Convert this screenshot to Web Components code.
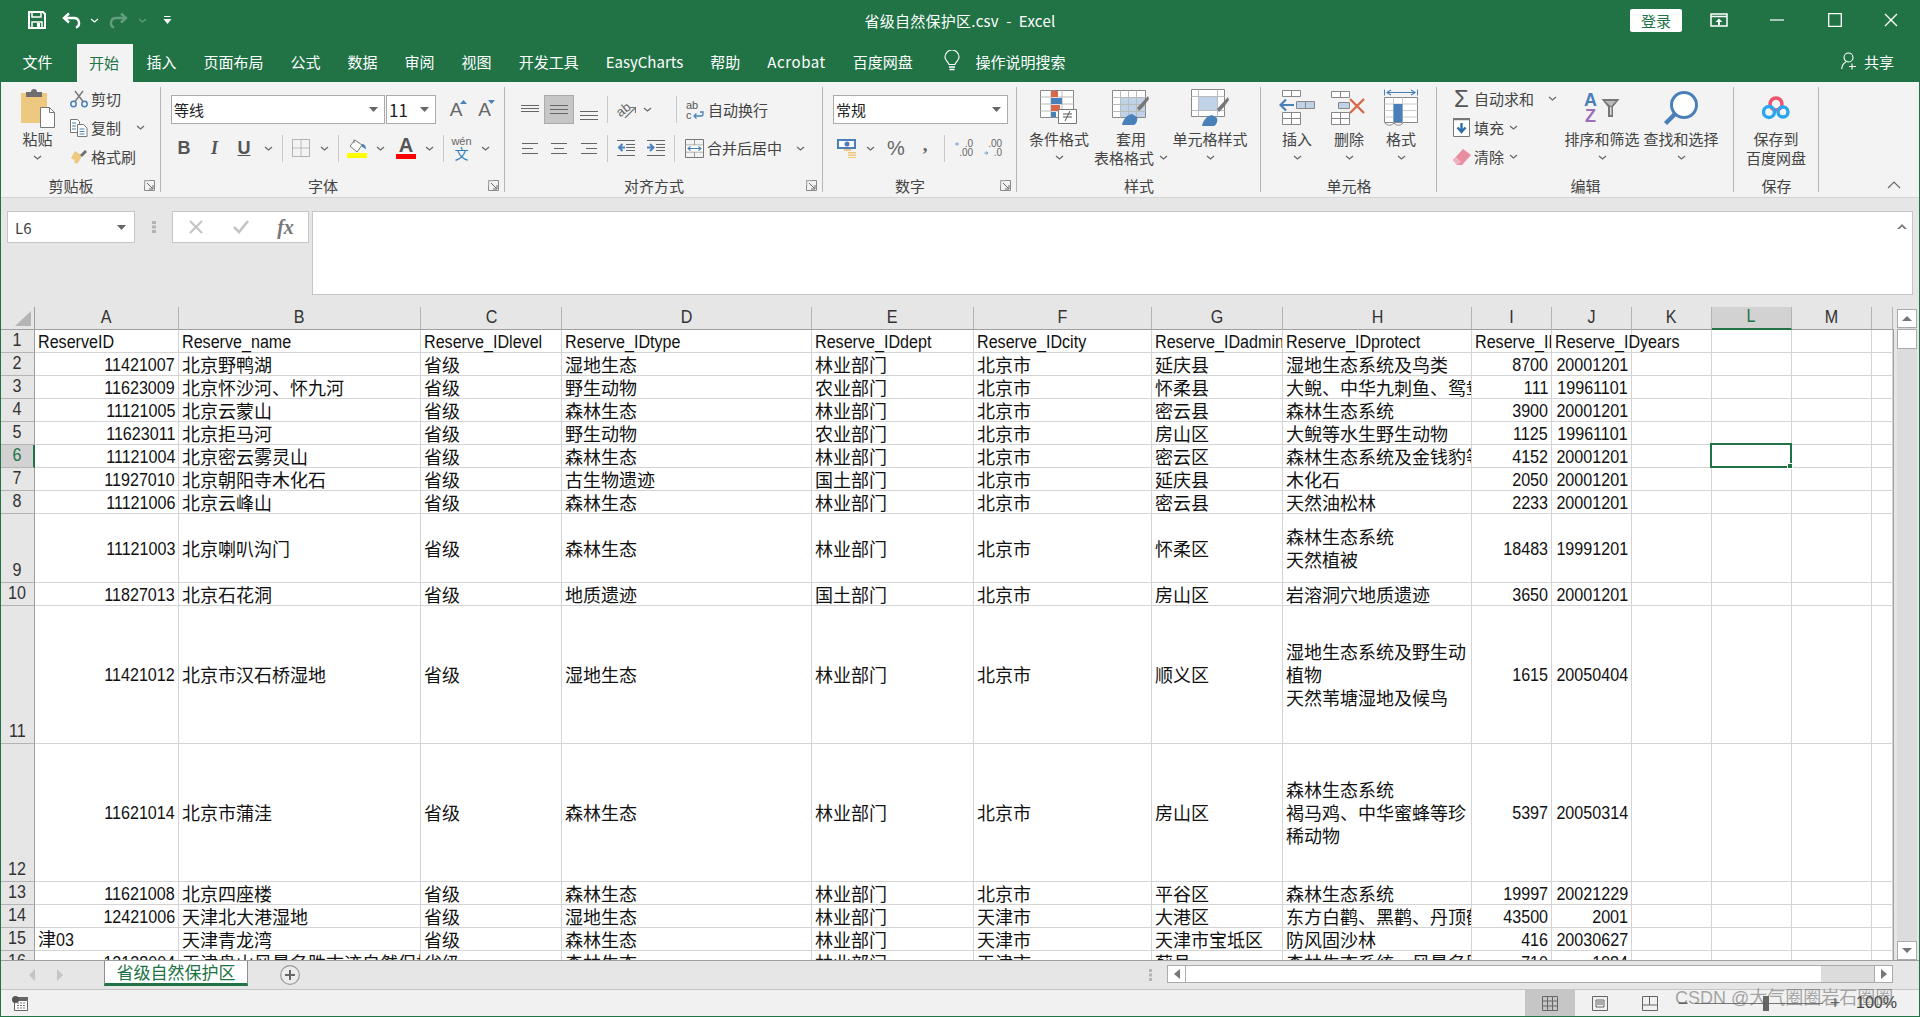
<!DOCTYPE html>
<html lang="zh-CN">
<head>
<meta charset="utf-8">
<title>省级自然保护区.csv - Excel</title>
<style>
  html, body { margin: 0; height: 100%; overflow: hidden; background: #f3f3f3; }
  body { font-family: "Noto Sans CJK SC", "Liberation Sans", sans-serif; }
</style>
</head>
<body>
<xl-window>
  <xl-titlebar></xl-titlebar>
  <xl-tabs></xl-tabs>
  <xl-ribbon></xl-ribbon>
  <xl-formula></xl-formula>
  <xl-sheet></xl-sheet>
  <xl-sheetbar></xl-sheetbar>
  <xl-status></xl-status>
</xl-window>
<script>
const GREEN = '#217346';
const svg = (w, h, body) => `<svg xmlns="http://www.w3.org/2000/svg" width="${w}" height="${h}" viewBox="0 0 ${w} ${h}" fill="none">${body}</svg>`;
const chev = svg(9, 5, '<path d="M1 1l3.5 3L8 1" stroke="#666" stroke-width="1.2"/>');
const drop = svg(9, 5, '<path d="M0 0h9L4.5 5z" fill="#666"/>');
const launcher = svg(11, 11, '<path d="M.5.5h10v10H.5z" stroke="#888"/><path d="M1 1h5M1 1v5" stroke="#ccc"/><path d="M3 3l5.5 5.5M9 5v4H5" stroke="#666"/>');
const lines = (ys, x1, x2, c = '#666') => ys.map(y => `<path d="M${x1} ${y}.5H${x2}" stroke="${c}"/>`).join('');
const rows3 = (a, b, c) => `<path d="M${a[0]} .5H${a[1]}M${b[0]} 5.5H${b[1]}M${c[0]} 10.5H${c[1]}" stroke="#666"/>`;

const ICONS = {
  save: svg(18, 18, '<path d="M1 1h14l2 2v14H1z" stroke="#fff" stroke-width="2"/><path d="M4 1v5h9V1" stroke="#fff" stroke-width="1.5"/><path d="M4 17v-6h10v6" stroke="#fff" stroke-width="1.5"/><path d="M9 12h3v4H9z" fill="#fff"/>'),
  undo: svg(20, 17, '<path d="M7 1.5L2 6l5 4.5" stroke="#fff" stroke-width="2.4"/><path d="M3 6h9a5 5 0 0 1 2 9.6" stroke="#fff" stroke-width="2.4"/>'),
  redo: svg(20, 17, '<path d="M13 1.5L18 6l-5 4.5" stroke="#fff" stroke-width="2.4"/><path d="M17 6H8a5 5 0 0 0-2 9.6" stroke="#fff" stroke-width="2.4"/>'),
  wchev: svg(9, 5, '<path d="M1 1l3.5 3L8 1" stroke="#fff" stroke-width="1.2"/>'),
  custom: svg(9, 9, '<path d="M1 .5h6.5" stroke="#fff"/><path d="M.5 3h8L4.5 8z" fill="#fff"/>'),
  opts: svg(18, 14, '<path d="M1 1h16v12H1z" stroke="#fff" stroke-width="1.5"/><path d="M1 3.5h16" stroke="#fff" stroke-width="1.5"/><path d="M9 5.5l3.5 3.5H10v3H8V9H5.5z" fill="#fff"/>'),
  min: svg(14, 2, '<path d="M0 1h14" stroke="#fff" stroke-width="1.2"/>'),
  max: svg(14, 14, '<path d="M.7.7h12.6v12.6H.7z" stroke="#fff" stroke-width="1.3"/>'),
  close: svg(14, 14, '<path d="M1 1l12 12M13 1L1 13" stroke="#fff" stroke-width="1.4"/>'),
  bulb: svg(16, 22, '<path d="M5 14.5C4 11.5 1 10.5 1 7a7 7 0 0 1 14 0c0 3.5-3 4.5-4 7.5z" stroke="#fff" stroke-width="1.2"/><path d="M5 17h6M5.5 19.5h5" stroke="#fff" stroke-width="1.6"/>'),
  share: svg(16, 18, '<circle cx="7.5" cy="5.5" r="4.5" stroke="#fff" stroke-width="1.1"/><path d="M.7 17c.3-4 2-6 4.3-7M11 11.5v6M8 14.5h7" stroke="#fff" stroke-width="1.1"/>'),
  paste: svg(36, 40, '<path d="M1 5h26v30H1z" fill="#edc87e"/><path d="M6 4h5a3 3 0 0 1 6 0h5v5H6z" fill="#6e6e6e"/><path d="M20.5 19.5h9l5 5v15h-14z" fill="#fff" stroke="#777"/><path d="M29.5 19.5v5h5" stroke="#777"/>'),
  cut: svg(18, 18, '<circle cx="3.5" cy="14" r="2.7" stroke="#4a80ba" stroke-width="1.5"/><circle cx="14.5" cy="14" r="2.7" stroke="#4a80ba" stroke-width="1.5"/><path d="M5 11.5L13 1M13 11.5L5 1" stroke="#777" stroke-width="1.4"/>'),
  copy: svg(18, 18, '<path d="M.5.5h7l2 2v11H.5z" fill="#fff" stroke="#777"/><path d="M7.5 5.5h6L17 9v8.5H7.5z" fill="#fff" stroke="#777"/><path d="M2 4h4M2 7h4M2 10h4M9.5 10h5M9.5 12.5h5M9.5 15h5" stroke="#4a80ba"/>'),
  brush: svg(18, 16, '<path d="M11 6L5 2 1 9l3 2 1-1-1 3 3 2 4-6z" fill="#edc87e"/><path d="M10 6l5-5 2 2-5 5z" fill="#6e6e6e"/>'),
  borders: svg(18, 18, '<path d="M.5.5h17v17H.5z" stroke="#777" stroke-dasharray="1 1"/><path d="M9 .5v17M.5 9h17" stroke="#888" stroke-dasharray="1 1"/>'),
  fill: svg(20, 14, '<path d="M3 7l5-6 7 5-5 7z" fill="#fff" stroke="#777"/><path d="M7 4V.5" stroke="#777"/><path d="M15 5c3 0 4 3 4 5-2 0-2-2-4-2z" fill="#4a80ba"/>'),
  wrap: svg(18, 16, '<path d="M14 9h3v2a2 2 0 0 1-2 2H8" stroke="#4a80ba" stroke-width="1.3"/><path d="M10.5 10.5L8 13l2.5 2.5" stroke="#4a80ba" stroke-width="1.3"/>'),
  merge: svg(19, 19, '<path d="M.5.5h18v18H.5z" stroke="#777"/><path d="M.5 6h18M.5 13h18M9.5.5V6M9.5 13v5.5" stroke="#999"/><path d="M1 6.5h17v6H1z" fill="#fff"/><path d="M3 9.5h13M5.5 7.5l-2.5 2 2.5 2M13.5 7.5l2.5 2-2.5 2" stroke="#4a80ba" stroke-width="1.1"/>'),
  orient: svg(20, 20, '<path d="M9 18L19 8M14 7.5h5.5V13" stroke="#777" stroke-width="1.2"/>'),
  indentL: svg(18, 16, lines([0, 15], 0, 18) + lines([4, 7, 10], 9, 18) + '<path d="M8 7.5H3M5.5 4L2 7.5 5.5 11" stroke="#4a80ba" stroke-width="2"/>'),
  indentR: svg(18, 16, lines([0, 15], 0, 18) + lines([4, 7, 10], 9, 18) + '<path d="M0 7.5h5M3 4l3.5 3.5L3 11" stroke="#4a80ba" stroke-width="2"/>'),
  money: svg(20, 19, '<path d="M0 0h19v10H0z" fill="#4a80ba"/><path d="M2 2h15v6H2z" fill="#fff"/><circle cx="10" cy="5" r="2.5" fill="#4a80ba"/><path d="M11 13h8v1.5h-8zM11 15.5h8V17h-8zM11 18h8v1h-8z" fill="#edc87e"/><path d="M7 11h7" stroke="#edc87e" stroke-width="2"/>'),
  decUp: svg(18, 8, '<path d="M8 4H2M4.5 1L1.5 4l3 3" stroke="#4a80ba" stroke-width="1.6"/>'),
  decDown: svg(18, 8, '<path d="M1 4h6M4.5 1l3 3-3 3" stroke="#4a80ba" stroke-width="1.6"/>'),
  cond: svg(38, 36, '<path d="M.5.5h33v27H.5z" fill="#fff" stroke="#888"/><path d="M11 .5v27M22 .5v27M.5 7h33M.5 14h33M.5 21h33" stroke="#bbb"/><path d="M11 1h7v6h-7z" fill="#d9674a"/><path d="M11 8h11v6H11z" fill="#4a80ba"/><path d="M11 15h9v6h-9z" fill="#d9674a"/><path d="M11 22h5v5h-5z" fill="#4a80ba"/><path d="M18.5 19.5h18v14h-18z" fill="#fff" stroke="#777"/><path d="M23 27h9M23 24h9M30 21l-5 10" stroke="#555"/>'),
  table: svg(38, 36, '<path d="M.5.5h33v27H.5z" fill="#fff" stroke="#888"/><path d="M8 8h25v19H8z" fill="#bfd2e8"/><path d="M8.5.5v27M16.5.5v27M24.5.5v27M.5 7.5h33M.5 14.5h33M.5 21.5h33" stroke="#bbb"/><path d="M25 18l11-12 1 3-5 7-5 5z" fill="#777"/><path d="M10 35c1-6 5-10 10-11l5 3c1 4-1 7-3 8z" fill="#4a80ba"/>'),
  cellst: svg(39, 38, '<path d="M.5.5h33v27H.5z" fill="#fff" stroke="#888"/><path d="M7.5 7.5h19v14h-19z" fill="#bfd2e8"/><path d="M7.5.5v27M26.5.5v27M.5 7.5h33M.5 21.5h33" stroke="#bbb"/><path d="M26 20l11-12 1 3-5 7-5 5z" fill="#777"/><path d="M11 37c1-6 5-10 10-11l5 3c1 4-1 7-3 8z" fill="#4a80ba"/>'),
  ins: svg(36, 35, '<path d="M3.5.5h18v6h-18zM3.5 22.5h18v12h-18z" fill="#fff" stroke="#888"/><path d="M12.5.5v6M12.5 22.5v12M3.5 28.5h18" stroke="#888"/><path d="M17.5 11.5h18v7h-18z" fill="#bfd2e8" stroke="#888"/><path d="M26.5 11.5v7" stroke="#888"/><path d="M15 15H2M7 9.5L1.5 15 7 20.5" stroke="#4a80ba" stroke-width="2.2"/>'),
  del: svg(36, 34, '<path d="M.5.5h18v6H.5zM.5 21.5h18v12H.5z" fill="#fff" stroke="#888"/><path d="M9.5.5v6M9.5 21.5v12M.5 27.5h18" stroke="#888"/><path d="M7.5 11.5h11v6h-11z" fill="#bfd2e8" stroke="#888"/><path d="M19 8l14 14M33 8L19 22" stroke="#d9674a" stroke-width="2.4"/>'),
  fmt: svg(34, 37, '<path d="M.5.5v6M33.5.5v6" stroke="#4a80ba"/><path d="M3 3.5h28M7 1L3 3.5 7 6M27 1l4 2.5L27 6" stroke="#4a80ba" stroke-width="1.2"/><path d="M.5 8.5h33v25H.5z" fill="#fff" stroke="#888"/><path d="M9.5 8.5v25M18.5 8.5v25M.5 15h33M.5 21.5h33M.5 28h33" stroke="#ccc"/><path d="M9.5 15h9v18h-9z" fill="#4a80ba"/><path d="M1 34c3 3 6 3 9 0 3 3 6 3 9 0" stroke="#888"/>'),
  fillDown: svg(18, 20, '<path d="M.5.5h16v18H.5z" fill="#fff" stroke="#777"/><path d="M0 1h17" stroke="#777" stroke-width="2.5"/><path d="M8.5 5v9M4.5 9.5l4 4.5 4-4.5" stroke="#2f6ea8" stroke-width="2.4"/>'),
  eraser: svg(20, 18, '<path d="M1 12l10-11 8 6-9 10H5z" fill="#e98da0"/><path d="M5 17l-4-5 3-3 5 5z" fill="#f1b3c0"/>'),
  filter: svg(19, 20, '<path d="M.5 1h18L12 9v10H7V9z" fill="#777"/><path d="M4 3h11l-5 5.5z" fill="#bbb"/><path d="M9 9h1.5v8H9z" fill="#ddd"/>'),
  find: svg(36, 36, '<circle cx="21" cy="15" r="12.5" fill="#fff" stroke="#4a80ba" stroke-width="3"/><path d="M12 24L2.5 33.5" stroke="#4a80ba" stroke-width="4.5"/>'),
  baidu: svg(28, 24, '<circle cx="14" cy="8" r="6" stroke="#f0506e" stroke-width="3.4"/><circle cx="7" cy="16" r="5.5" stroke="#2aa7ec" stroke-width="3.4"/><circle cx="21" cy="16" r="5" stroke="#2aa7ec" stroke-width="3.4"/>'),
  close2: svg(14, 14, '<path d="M1 1l12 12M13 1L1 13" stroke="#c4c4c4" stroke-width="2.2"/>'),
  check: svg(16, 14, '<path d="M1 7l5 5L15 1" stroke="#c4c4c4" stroke-width="2.6"/>'),
  macro: svg(16, 15, '<path d="M2.5 4.5h13v10h-13z" fill="#fff" stroke="#666"/><path d="M2 1h14v3H2z" fill="#666"/><path d="M5 7h9M5 9.5h9M5 12h9" stroke="#777" stroke-dasharray="2 1"/><circle cx="3.5" cy="3.5" r="3.5" fill="#555"/>'),
  normal: svg(16, 15, '<path d="M.5.5h15v14H.5zM5.5.5v14M10.5.5v14M.5 5h15M.5 10h15" stroke="#666"/>'),
  pageL: svg(16, 15, '<path d="M.5.5h15v14H.5z" stroke="#666"/><path d="M4 4h8v7H4z" stroke="#666"/><path d="M5 6h6M5 8h6" stroke="#666"/>'),
  pageB: svg(16, 15, '<path d="M.5.5h15v14H.5zM.5 9h15M7.5.5V9" stroke="#666"/>')
};

// 一个工具格: 固定宽度,内容居中
class XlTool extends HTMLElement {
  constructor() { super(); this.attachShadow({ mode: 'open' }); }
  connectedCallback() {
    const w = this.getAttribute('w');
    this.shadowRoot.innerHTML = `<style>
      :host { display: flex; flex: none; align-items: center; justify-content: center; width: ${w}px; height: 100%; color: #555; }
      svg, ::slotted(svg) { display: block; }
    </style><slot></slot>`;
  }
}
customElements.define('xl-tool', XlTool);

class XlCombo extends HTMLElement {
  constructor() { super(); this.attachShadow({ mode: 'open' }); }
  connectedCallback() {
    const w = this.getAttribute('w');
    const size = this.getAttribute('size') || 15;
    this.shadowRoot.innerHTML = `<style>
      :host { display: flex; flex: none; align-items: center; box-sizing: border-box; width: ${w}px; height: 100%; background: #fff; border: 1px solid #ababab; padding: 0 6px 0 2px; font-size: ${size}px; color: #222; }
      span { flex: 1; }
    </style><span><slot></slot></span>${drop}`;
  }
}
customElements.define('xl-combo', XlCombo);

// 大按钮: 图标 + 一到两行文字 + 下拉箭头
class XlBig extends HTMLElement {
  constructor() { super(); this.attachShadow({ mode: 'open' }); }
  connectedCallback() {
    const w = this.getAttribute('w');
    const l1 = this.getAttribute('l1');
    const l2 = this.getAttribute('l2');
    const noChev = this.hasAttribute('nochev');
    const second = l2 ? `<div class="line">${l2}${noChev ? '' : `<span class="ic">${chev}</span>`}</div>`
                      : `<div class="line">${noChev ? '' : chev}</div>`;
    this.shadowRoot.innerHTML = `<style>
      :host { display: block; flex: none; width: ${w}px; }
      .icon { height: 43px; display: flex; align-items: center; justify-content: center; }
      .line { height: 19px; line-height: 19px; display: flex; align-items: center; justify-content: center; white-space: nowrap; }
      .ic { margin-left: 5px; display: flex; }
      svg { display: block; }
    </style>
    <div class="icon"><slot></slot></div>
    <div class="line">${l1}</div>
    ${second}`;
  }
}
customElements.define('xl-big', XlBig);

class XlSmall extends HTMLElement {
  constructor() { super(); this.attachShadow({ mode: 'open' }); }
  connectedCallback() {
    const cm = this.getAttribute('cm');
    this.shadowRoot.innerHTML = `<style>
      :host { display: flex; align-items: center; height: 29px; white-space: nowrap; }
      .icon { width: 25px; flex: none; display: flex; align-items: center; justify-content: center; }
      .ch { margin-left: ${cm || 0}px; display: flex; }
    </style>
    <div class="icon"><slot></slot></div>
    <span>${this.getAttribute('label')}</span>
    ${cm ? `<span class="ch">${chev}</span>` : ''}`;
  }
}
customElements.define('xl-small', XlSmall);

class XlGroup extends HTMLElement {
  constructor() { super(); this.attachShadow({ mode: 'open' }); }
  connectedCallback() {
    const w = this.getAttribute('w');
    const pad = this.getAttribute('pad') || 0;
    const top = this.getAttribute('top') || 4;
    this.shadowRoot.innerHTML = `<style>
      :host { display: flex; flex-direction: column; flex: none; box-sizing: border-box; width: ${w}px; height: 115px; position: relative; }
      :host::after { content: ""; position: absolute; right: 0; top: 5px; bottom: 5px; width: 1px; background: #b6b6b6; }
      .body { flex: 1; min-height: 0; box-sizing: border-box; padding: ${top}px 0 0 ${pad}px; display: flex; }
      .foot { height: 22px; display: flex; align-items: center; padding-bottom: 1px; box-sizing: border-box; }
      .lab { flex: 1; text-align: center; }
      .lau { flex: none; width: 20px; height: 12px; display: flex; justify-content: flex-start; padding-left: 3px; box-sizing: border-box; }
    </style>
    <div class="body"><slot></slot></div>
    <div class="foot"><div class="lab">${this.getAttribute('label')}</div>
    ${this.hasAttribute('launcher') ? `<div class="lau">${launcher}</div>` : ''}</div>`;
  }
}
customElements.define('xl-group', XlGroup);

class XlRibbon extends HTMLElement {
  constructor() { super(); this.attachShadow({ mode: 'open' }); }
  connectedCallback() {
    const t = (w, html = '') => `<xl-tool w="${w}">${html}</xl-tool>`;
    const sep = w => t(w, '<i class="sep"></i>');
    const ic = n => ICONS[n];
    this.shadowRoot.innerHTML = `<style>
      :host { display: flex; height: 116px; box-sizing: border-box; background: #f3f3f3; border-bottom: 1px solid #d4d4d4; font-size: 15px; color: #444; position: relative; }
      .rows { display: flex; flex-direction: column; gap: 9px; }
      .row { display: flex; height: 29px; flex: none; }
      .row2 { height: 30px; }
      .sep { display: block; width: 1px; height: 27px; background: #c8c8c8; }
      .col { display: flex; flex-direction: column; flex: none; margin-top: -2px; }
      .fmtb { font: bold 18px "Liberation Sans", sans-serif; color: #555; }
      .fmti { font: italic bold 18px "Liberation Serif", serif; color: #555; }
      .fmtu { font: bold 18px "Liberation Sans", sans-serif; color: #555; text-decoration: underline; }
      .aa { font: 19px "Liberation Sans", sans-serif; color: #666; position: relative; display: block; margin-right: 4px; }
      .aa svg { position: absolute; left: 10px; top: 1px; }
      .wen { display: flex; flex-direction: column; align-items: center; line-height: 11px; font-size: 11px; color: #666; font-family: "Liberation Sans", sans-serif; }
      .wen span { font: 14px/13px "Noto Sans CJK SC", sans-serif; color: #2f7fc1; }
      .colr { display: flex; flex-direction: column; align-items: center; width: 20px; }
      .colr i { display: block; width: 20px; height: 5px; }
      .colr b { font: bold 20px/17px "Liberation Sans", sans-serif; color: #555; }
      .txt { font-size: 15px; line-height: 29px; white-space: nowrap; margin-left: -2px; }
      .pct { font: 20px "Liberation Sans", sans-serif; color: #666; }
      .com { font: bold 19px "Liberation Serif", serif; color: #666; margin-top: -6px; }
      .dec { display: flex; flex-direction: column; align-items: flex-end; font: 10px/9px "Liberation Sans", sans-serif; color: #666; }
      .dec span { display: flex; align-items: center; height: 9px; }
      .dec svg { width: 9px; height: 6px; margin-right: 1px; }
      .sig { font: 24px "Liberation Sans", sans-serif; color: #555; }
      .az { display: flex; align-items: center; gap: 4px; }
      .az div { font: bold 18px/16px "Liberation Sans", sans-serif; text-align: center; }
      .az .a { color: #4a80ba; } .az .z { color: #9c6fb8; }
      .abc { font: 11px/10px "Liberation Sans", sans-serif; color: #555; position: relative; width: 18px; }
      .abc svg { position: absolute; left: 0; top: 3px; }
      .orient { font: 13px/13px "Liberation Sans", sans-serif; color: #666; transform: rotate(-38deg); display: block; position: absolute; left: 0; top: 3px; }
      .orw { position: relative; width: 20px; height: 20px; }
      .active { background: #c6c6c6; box-shadow: inset 0 0 0 1px #aaa; }
      .collapse { position: absolute; right: 18px; bottom: 4px; }
    </style>
    <xl-group w="160" label="剪贴板" launcher pad="8">
      <xl-big w="57" l1="粘贴">${ic('paste')}</xl-big>
      <div class="col">
        <xl-small label="剪切">${ic('cut')}</xl-small>
        <xl-small label="复制" cm="15">${ic('copy')}</xl-small>
        <xl-small label="格式刷">${ic('brush')}</xl-small>
      </div>
    </xl-group>
    <xl-group w="344" label="字体" launcher pad="10" top="13">
      <div class="rows">
        <div class="row"><xl-combo w="214">等线</xl-combo><xl-tool w="1"></xl-tool><xl-combo w="50" size="17">11</xl-combo>
          ${t(8)}<xl-tool w="28"><span class="aa">A${svg(7, 4, '<path d="M0 4h7L3.5 0z" fill="#4a80ba"/>')}</span></xl-tool>
          <xl-tool w="29"><span class="aa">A${svg(7, 4, '<path d="M0 0h7L3.5 4z" fill="#4a80ba"/>')}</span></xl-tool></div>
        <div class="row row2" style="margin-left:-2px">
          ${t(30, '<span class="fmtb">B</span>')}${t(31, '<span class="fmti">I</span>')}${t(28, '<span class="fmtu">U</span>')}${t(20, chev)}${sep(8)}${t(30, ic('borders'))}${t(16, chev)}${sep(12)}
          ${t(26, `<div class="colr">${ic('fill')}<i style="background:#ff0"></i></div>`)}${t(20, chev)}
          ${t(32, '<div class="colr"><b>A</b><i style="background:#f00"></i></div>')}${t(14, chev)}${sep(14)}
          ${t(23, '<div class="wen">wén<span>文</span></div>')}${t(24, chev)}
        </div>
      </div>
    </xl-group>
    <xl-group w="318" label="对齐方式" launcher pad="10" top="13">
      <div class="rows">
        <div class="row">
          ${t(29, `<span style="margin-top:-7px">${svg(18, 8, lines([0, 3, 6], 0, 18))}</span>`)}
          <xl-tool w="30" class="active">${svg(18, 10, lines([0, 4, 8], 0, 18))}</xl-tool>
          <xl-tool w="30"><span style="margin-top:7px">${svg(18, 10, lines([1, 5, 9], 0, 18))}</span></xl-tool>${sep(6)}
          ${t(32, `<div class="orw"><span class="orient">ab</span>${ic('orient')}</div>`)}${t(10, chev)}${t(20)}${sep(8)}
          ${t(30, `<div class="abc">ab<br>c${ic('wrap')}</div>`)}<span class="txt">自动换行</span>
        </div>
        <div class="row row2">
          ${t(29, svg(16, 11, rows3([0, 16], [0, 11], [0, 16])))}
          ${t(30, svg(16, 11, rows3([0, 16], [3, 13], [0, 16])))}
          ${t(30, svg(16, 11, rows3([0, 16], [5, 16], [0, 16])))}${sep(6)}
          ${t(32, ic('indentL'))}${t(28, ic('indentR'))}${sep(9)}
          ${t(30, ic('merge'))}<span class="txt">合并后居中</span>${t(36, chev)}
        </div>
      </div>
    </xl-group>
    <xl-group w="194" label="数字" launcher pad="10" top="13">
      <div class="rows">
        <div class="row"><xl-combo w="175">常规</xl-combo></div>
        <div class="row row2">
          ${t(28, ic('money'))}${t(18, chev)}${t(34, '<span class="pct">%</span>')}${t(24, '<span class="com">,</span>')}${sep(14)}
          ${t(26, `<div class="dec"><span>${ic('decUp')}.0</span><span>.00</span></div>`)}
          ${t(32, `<div class="dec"><span>.00</span><span>${ic('decDown')}.0</span></div>`)}
        </div>
      </div>
    </xl-group>
    <xl-group w="244" label="样式" pad="4">
      <xl-big w="76" l1="条件格式">${ic('cond')}</xl-big>
      <xl-big w="68" l1="套用" l2="表格格式">${ic('table')}</xl-big>
      <xl-big w="90" l1="单元格样式">${ic('cellst')}</xl-big>
    </xl-group>
    <xl-group w="176" label="单元格" pad="10">
      <xl-big w="52" l1="插入">${ic('ins')}</xl-big>
      <xl-big w="52" l1="删除">${ic('del')}</xl-big>
      <xl-big w="52" l1="格式">${ic('fmt')}</xl-big>
    </xl-group>
    <xl-group w="297" label="编辑" pad="12">
      <div class="col" style="width:115px">
        <xl-small label="自动求和" cm="14"><span class="sig">Σ</span></xl-small>
        <xl-small label="填充" cm="5">${ic('fillDown')}</xl-small>
        <xl-small label="清除" cm="5">${ic('eraser')}</xl-small>
      </div>
      <xl-big w="76" l1="排序和筛选"><div class="az"><div><div class="a">A</div><div class="z">Z</div></div>${ic('filter')}</div></xl-big>
      <xl-big w="82" l1="查找和选择">${ic('find')}</xl-big>
    </xl-group>
    <xl-group w="85" label="保存">
      <xl-big w="84" l1="保存到" l2="百度网盘" nochev>${ic('baidu')}</xl-big>
    </xl-group>
    <span class="collapse">${svg(14, 8, '<path d="M1 7l6-6 6 6" stroke="#666" stroke-width="1.1"/>')}</span>`;
  }
}
customElements.define('xl-ribbon', XlRibbon);

class XlTitlebar extends HTMLElement {
  constructor() { super(); this.attachShadow({ mode: 'open' }); }
  connectedCallback() {
    const t = (w, html, op) => `<xl-tool w="${w}" ${op ? 'style="opacity:.3"' : ''}>${html}</xl-tool>`;
    this.shadowRoot.innerHTML = `<style>
      :host { display: grid; grid-template-columns: 1fr auto 1fr; align-items: center; height: 40px; background: ${GREEN}; color: #fff; font-size: 15px; }
      .l, .r { display: flex; align-items: center; height: 100%; }
      .l { padding-left: 18px; }
      .r { justify-content: flex-end; padding-right: 8px; }
      .title { white-space: pre; letter-spacing: .25px; }
      .login { width: 52px; height: 23px; line-height: 23px; text-align: center; background: #fff; color: ${GREEN}; border-radius: 2px; flex: none; }
    </style>
    <div class="l">${t(36, ICONS.save)}${t(34, ICONS.undo)}${t(10, ICONS.wchev)}${t(38, ICONS.redo, 1)}${t(10, ICONS.wchev, 1)}${t(40, ICONS.custom)}</div>
    <div class="title">省级自然保护区.csv  -  Excel</div>
    <div class="r"><div class="login">登录</div>${t(74, ICONS.opts)}${t(42, ICONS.min)}${t(73, ICONS.max)}${t(40, ICONS.close)}</div>`;
  }
}
customElements.define('xl-titlebar', XlTitlebar);

class XlTabs extends HTMLElement {
  constructor() { super(); this.attachShadow({ mode: 'open' }); }
  connectedCallback() {
    const names = ['插入', '页面布局', '公式', '数据', '审阅', '视图', '开发工具', 'EasyCharts', '帮助', 'Acrobat', '百度网盘'];
    this.shadowRoot.innerHTML = `<style>
      :host { display: flex; height: 42px; background: ${GREEN}; color: #fff; font-size: 15px; align-items: stretch; padding-left: 8px; white-space: nowrap; }
      div { display: flex; align-items: center; padding: 1px 13.5px 0; }
      .on { background: #f3f3f3; color: ${GREEN}; margin: 4px 0 0 11px; padding: 0 14px 2px 12px; height: 38px; box-sizing: border-box; }
      .acro { letter-spacing: .6px; }
      .search { padding: 0; margin-left: 18px; gap: 15px; }
      .share { margin-left: auto; padding: 0 25px 0 0; gap: 7px; }
    </style>
    <div>文件</div><div class="on">开始</div>
    ${names.map(n => `<div${n === 'Acrobat' ? ' class="acro"' : ''}>${n}</div>`).join('')}
    <div class="search">${ICONS.bulb}<span>操作说明搜索</span></div>
    <div class="share">${ICONS.share}<span>共享</span></div>`;
  }
}
customElements.define('xl-tabs', XlTabs);

class XlFormula extends HTMLElement {
  constructor() { super(); this.attachShadow({ mode: 'open' }); }
  connectedCallback() {
    this.shadowRoot.innerHTML = `<style>
      :host { display: flex; height: 109px; box-sizing: border-box; background: #e6e6e6; padding: 13px 6px 0 6px; align-items: flex-start; font-size: 15px; color: #444; }
      .box { background: #fff; border: 1px solid #c6c6c6; box-sizing: border-box; height: 32px; display: flex; align-items: center; flex: none; }
      .name { width: 128px; padding: 0 8px 0 7px; font-size: 15px; }
      .name span { flex: 1; }
      .dots { width: 37px; flex: none; height: 32px; display: flex; align-items: center; justify-content: center; }
      .fx { width: 137px; }
      .fx i { font: italic bold 20px "Liberation Serif", serif; color: #777; }
      .input { flex: 1; height: 84px; margin-left: 3px; background: #fff; border: 1px solid #c6c6c6; box-sizing: border-box; display: flex; justify-content: flex-end; padding: 11px 5px 0 0; }
    </style>
    <div class="box name"><span>L6</span>${drop}</div>
    <div class="dots">${svg(4, 12, '<path d="M0 0h4v3H0zM0 4.5h4v3H0zM0 9h4v3H0z" fill="#b4b4b4"/>')}</div>
    <div class="box fx"><xl-tool w="45">${ICONS.close2}</xl-tool><xl-tool w="45">${ICONS.check}</xl-tool><xl-tool w="45"><i>fx</i></xl-tool></div>
    <div class="input">${svg(10, 6, '<path d="M0 6l5-5 5 5H7.5L5 3.5 2.5 6z" fill="#777"/>')}</div>`;
  }
}
customElements.define('xl-formula', XlFormula);

const P = '省级', S = '森林生态', W = '湿地生态', Y = '野生动物', LY = '林业部门', NY = '农业部门', GT = '国土部门', BJ = '北京市', TJ = '天津市';
const SHEET = [
  { h: 23, c: ['ReserveID', 'Reserve_name', 'Reserve_IDlevel', 'Reserve_IDtype', 'Reserve_IDdept', 'Reserve_IDcity', 'Reserve_IDadmin', 'Reserve_IDprotect', 'Reserve_ID', 'Reserve_IDyears'] },
  { h: 23, c: [11421007, '北京野鸭湖', P, W, LY, BJ, '延庆县', '湿地生态系统及鸟类', 8700, 20001201] },
  { h: 23, c: [11623009, '北京怀沙河、怀九河', P, Y, NY, BJ, '怀柔县', '大鲵、中华九刺鱼、鸳鸯', 111, 19961101] },
  { h: 23, c: [11121005, '北京云蒙山', P, S, LY, BJ, '密云县', '森林生态系统', 3900, 20001201] },
  { h: 23, c: [11623011, '北京拒马河', P, Y, NY, BJ, '房山区', '大鲵等水生野生动物', 1125, 19961101] },
  { h: 23, c: [11121004, '北京密云雾灵山', P, S, LY, BJ, '密云区', '森林生态系统及金钱豹等', 4152, 20001201] },
  { h: 23, c: [11927010, '北京朝阳寺木化石', P, '古生物遗迹', GT, BJ, '延庆县', '木化石', 2050, 20001201] },
  { h: 23, c: [11121006, '北京云峰山', P, S, LY, BJ, '密云县', '天然油松林', 2233, 20001201] },
  { h: 69, c: [11121003, '北京喇叭沟门', P, S, LY, BJ, '怀柔区', '森林生态系统\n天然植被', 18483, 19991201] },
  { h: 23, c: [11827013, '北京石花洞', P, '地质遗迹', GT, BJ, '房山区', '岩溶洞穴地质遗迹', 3650, 20001201] },
  { h: 138, c: [11421012, '北京市汉石桥湿地', P, W, LY, BJ, '顺义区', '湿地生态系统及野生动\n植物\n天然苇塘湿地及候鸟', 1615, 20050404] },
  { h: 138, c: [11621014, '北京市蒲洼', P, S, LY, BJ, '房山区', '森林生态系统\n褐马鸡、中华蜜蜂等珍\n稀动物', 5397, 20050314] },
  { h: 23, c: [11621008, '北京四座楼', P, S, LY, BJ, '平谷区', '森林生态系统', 19997, 20021229] },
  { h: 23, c: [12421006, '天津北大港湿地', P, W, LY, TJ, '大港区', '东方白鹳、黑鹳、丹顶鹤', 43500, 2001] },
  { h: 23, c: ['津03', '天津青龙湾', P, S, LY, TJ, '天津市宝坻区', '防风固沙林', 416, 20030627] },
  { h: 23, c: [12128004, '天津盘山风景名胜古迹自然保护区', P, S, LY, TJ, '蓟县', '森林生态系统、风景名胜', 710, 1984] }
];
const COLS = [144, 242, 141, 250, 162, 178, 131, 189, 80, 80, 80, 80, 80, 21];
const LETTERS = 'ABCDEFGHIJKLM';

class XlSheet extends HTMLElement {
  constructor() { super(); this.attachShadow({ mode: 'open' }); }
  latin(text) {
    return String(text).split('\n').map(line => line.replace(/[\x21-\x7e]+/g, m => `<span class="l">${m}</span>`)).join('<br>');
  }
  connectedCallback() {
    let html = `<div class="hd corner"><svg width="16" height="15" viewBox="0 0 16 15"><path d="M16 0v15H0z" fill="#b5b5b5"/></svg></div>`;
    COLS.forEach((w, i) => {
      html += `<div class="hd col ${i === 11 ? 'sel' : ''}">${LETTERS[i] ? this.latin(LETTERS[i]) : ''}</div>`;
    });
    SHEET.forEach((row, r) => {
      html += `<div class="hd rh ${r === 5 ? 'sel' : ''}">${this.latin(r + 1)}</div>`;
      COLS.forEach((w, c) => {
        const v = row.c[c];
        const num = typeof v === 'number';
        const spill = r === 0 && c === 9 ? ' spill' : '';
        const cur = r === 5 && c === 11 ? '<i class="cur"><b></b></i>' : '';
        html += `<div class="c${num ? ' r' : ''}${spill}">${v === undefined ? '' : `<div>${this.latin(v)}</div>`}${cur}</div>`;
      });
    });
    this.shadowRoot.innerHTML = `<style>
      :host { display: block; height: 653px; overflow: hidden; background: #e6e6e6; position: relative; font: 18px/23px "Noto Sans CJK SC", "Liberation Sans", sans-serif; color: #111; }
      .grid { display: grid; width: 1892px; background: #fff;
        grid-template-columns: 34px ${COLS.map(w => w + 'px').join(' ')};
        grid-template-rows: 23px ${SHEET.map(r => r.h + 'px').join(' ')}; }
      .hd { background: #e6e6e6; box-sizing: border-box; display: flex; justify-content: center; color: #333; }
      .corner { border-right: 1px solid #9f9f9f; border-bottom: 1px solid #9f9f9f; align-items: flex-end; justify-content: flex-end; padding: 0 3px 3px 0; }
      .col { border-right: 1px solid #b4b4b4; border-bottom: 1px solid #9f9f9f; align-items: flex-end; }
      .col.sel { background: #d2d2d2; color: ${GREEN}; border-bottom: 2px solid ${GREEN}; border-right-color: #b4b4b4; }
      .rh { border-right: 1px solid #9f9f9f; border-bottom: 1px solid #b4b4b4; align-items: flex-end; }
      .rh.sel { background: #d2d2d2; color: ${GREEN}; border-right: 2px solid ${GREEN}; }
      .c { box-sizing: border-box; border-right: 1px solid #d4d4d4; border-bottom: 1px solid #d4d4d4; display: flex; align-items: center; padding: 0 3px; overflow: clip visible; white-space: nowrap; position: relative; min-width: 0; }
      .c > div { flex: none; }
      .c.r { justify-content: flex-end; padding-right: 3px; }
      .c.spill { overflow: visible; z-index: 1; }
      .l { display: inline-block; font-family: "Liberation Sans", sans-serif; transform: scaleX(.895); transform-origin: left center; }
      .c.r .l { transform-origin: right center; }
      .hd .l { transform-origin: center; }
      .cur { position: absolute; left: -2px; top: -2px; right: -1px; bottom: -1px; border: 2px solid ${GREEN}; }
      .cur b { position: absolute; right: -3px; bottom: -3px; width: 4px; height: 4px; background: ${GREEN}; border: 1px solid #fff; }
      .c:has(.cur) { overflow: visible; z-index: 2; }
      .edge { position: absolute; left: 1892px; top: 22px; bottom: 0; width: 1px; background: #9f9f9f; }
      .vs { position: absolute; left: 1896px; top: 2px; bottom: 0; width: 20px; background: #dcdcdc; display: flex; flex-direction: column; }
      .btn { box-sizing: border-box; height: 19px; width: 20px; background: #fff; border: 1px solid #ababab; display: flex; align-items: center; justify-content: center; flex: none; }
      .thumb { box-sizing: border-box; height: 20px; width: 20px; margin-top: 1px; background: #fff; border: 1px solid #ababab; }
      .sp { flex: 1; }
    </style>
    <div class="grid">${html}</div>
    <div class="edge"></div>
    <div class="vs">
      <div class="btn">${svg(10, 5, '<path d="M0 5h10L5 0z" fill="#777"/>')}</div>
      <div class="thumb"></div><div class="sp"></div>
      <div class="btn">${svg(10, 5, '<path d="M0 0h10L5 5z" fill="#777"/>')}</div>
    </div>`;
  }
}
customElements.define('xl-sheet', XlSheet);

class XlSheetbar extends HTMLElement {
  constructor() { super(); this.attachShadow({ mode: 'open' }); }
  connectedCallback() {
    this.shadowRoot.innerHTML = `<style>
      :host { display: flex; height: 30px; box-sizing: border-box; background: #e6e6e6; border-top: 1px solid #9f9f9f; border-bottom: 1px solid #c4c4c4; align-items: flex-start; }
      .nav { width: 103px; height: 28px; display: flex; align-items: center; padding-left: 28px; gap: 22px; box-sizing: border-box; flex: none; }
      .tab { box-sizing: border-box; width: 144px; height: 25px; background: #fff; color: ${GREEN}; border: 1px solid #8f8f8f; border-width: 0 1px; border-bottom: 3px solid ${GREEN}; display: flex; align-items: center; justify-content: center; font-size: 17px; line-height: 22px; flex: none; }
      .plus { margin-left: 32px; margin-top: 4px; flex: none; }
      .sp { flex: 1; }
      .dots { width: 8px; height: 28px; display: flex; align-items: center; flex: none; }
      .hs { width: 726px; height: 18px; margin: 4px 26px 0 10px; display: flex; flex: none; background: #dcdcdc; box-sizing: border-box; border-top: 1px solid #ababab; border-bottom: 1px solid #ababab; }
      .btn { width: 19px; flex: none; background: #fff; border: 1px solid #ababab; border-width: 0 1px; display: flex; align-items: center; justify-content: center; box-sizing: border-box; }
      .thumb { flex: none; width: 635px; background: #fff; }
      .gap { flex: 1; }
    </style>
    <div class="nav">
      ${svg(6, 12, '<path d="M6 0v12L0 6z" fill="#c4c4c4"/>')}
      ${svg(6, 12, '<path d="M0 0v12l6-6z" fill="#c4c4c4"/>')}
    </div>
    <div class="tab">省级自然保护区</div>
    <div class="plus">${svg(20, 20, '<circle cx="10" cy="10" r="9.3" fill="#ececec" stroke="#999" stroke-width="1.2"/><path d="M10 5v10M5 10h10" stroke="#666" stroke-width="2"/>')}</div>
    <div class="sp"></div>
    <div class="dots">${svg(4, 12, '<path d="M0 0h3v3H0zM0 4.5h3v3H0zM0 9h3v3H0z" fill="#b4b4b4"/>')}</div>
    <div class="hs">
      <div class="btn">${svg(6, 10, '<path d="M6 0v10L0 5z" fill="#777"/>')}</div>
      <div class="thumb"></div><div class="gap"></div>
      <div class="btn">${svg(6, 10, '<path d="M0 0v10l6-5z" fill="#777"/>')}</div>
    </div>`;
  }
}
customElements.define('xl-sheetbar', XlSheetbar);

class XlStatus extends HTMLElement {
  constructor() { super(); this.attachShadow({ mode: 'open' }); }
  connectedCallback() {
    this.shadowRoot.innerHTML = `<style>
      :host { display: flex; height: 26px; background: #f1f1f1; align-items: stretch; font-size: 15px; color: #444; position: relative; }
      .macro { width: 1524px; display: flex; align-items: center; padding-left: 11px; box-sizing: border-box; flex: none; }
      .v { width: 50px; flex: none; display: flex; align-items: center; justify-content: center; }
      .v.on { background: #c6c6c6; }
      .zoom { flex: 1; display: flex; align-items: center; gap: 6px; padding-left: 2px; position: relative; }
      .track { width: 128px; height: 1px; background: #777; position: relative; flex: none; }
      .track i { position: absolute; left: 68px; top: -7px; width: 6px; height: 15px; background: #666; }
      .pm { font: 18px "Liberation Sans", sans-serif; color: #666; width: 12px; text-align: center; flex: none; }
      .pct { font: 16px "Liberation Sans", sans-serif; color: #444; flex: none; margin-left: 9px; }
      .mark { position: absolute; left: 1674px; top: -5px; font-size: 18px; line-height: 26px; color: rgba(95, 95, 95, .55); white-space: nowrap; font-family: "Liberation Sans", "Noto Sans CJK SC", sans-serif; }
    </style>
    <div class="macro">${ICONS.macro}</div>
    <div class="v on">${ICONS.normal}</div><div class="v">${ICONS.pageL}</div><div class="v">${ICONS.pageB}</div>
    <div class="zoom"><span class="pm">−</span><div class="track"><i></i></div><span class="pm">+</span><span class="pct">100%</span></div>
    <div class="mark">CSDN @大气圈圈岩石圈圈</div>`;
  }
}
customElements.define('xl-status', XlStatus);

class XlWindow extends HTMLElement {
  constructor() { super(); this.attachShadow({ mode: 'open' }); }
  connectedCallback() {
    this.shadowRoot.innerHTML = `<style>
      :host { display: flex; flex-direction: column; box-sizing: border-box; width: 1920px; height: 1017px; border: 1px solid ${GREEN}; border-top: 0; overflow: hidden; position: relative; }
    </style><slot></slot>`;
  }
}
customElements.define('xl-window', XlWindow);
</script>
</body>
</html>
